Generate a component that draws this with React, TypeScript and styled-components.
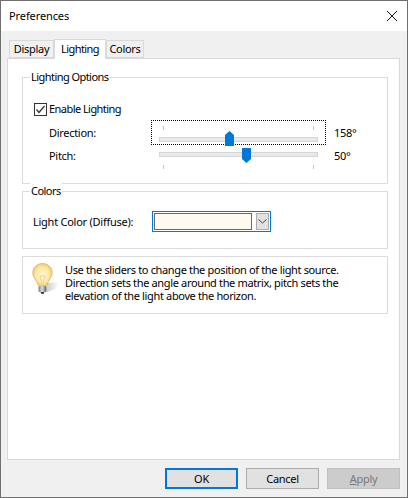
import { createGlobalStyle } from 'styled-components';
import styled from 'styled-components';

const GlobalStyle = createGlobalStyle`
  html, body {
    margin: 0;
    padding: 0;
    background: #f0f0f0;
  }
`;

const Dialog = styled.div`
  box-sizing: border-box;
  width: 408px;
  height: 498px;
  display: flex;
  flex-direction: column;
  background: #f0f0f0;
  border: 1px solid #707070;
  font-family: 'Noto Sans', sans-serif;
  font-size: 11px;
  letter-spacing: -0.3px;
  line-height: 16px;
  color: #000;
  overflow: hidden;
`;

const TitleBar = styled.div`
  height: 30px;
  flex: none;
  display: flex;
  align-items: center;
  justify-content: space-between;
  padding: 0 8px;
  background: #fff;
  font-size: 11px;
  letter-spacing: -0.1px;
`;

const CloseIcon = styled.svg`
  width: 10px;
  height: 10px;
  margin-right: 2px;
`;

const Body = styled.div`
  flex: 1;
  display: flex;
  flex-direction: column;
  padding: 7px 7px 8px 6px;
`;

const TabRow = styled.div`
  height: 20px;
  flex: none;
  display: flex;
  align-items: flex-end;
  padding-left: 2px;
  position: relative;
  z-index: 1;
`;

const Tab = styled.div<{ $active?: boolean; $width: number }>`
  box-sizing: border-box;
  width: ${(p) => p.$width}px;
  height: ${(p) => (p.$active ? 20 : 18)}px;
  margin-bottom: ${(p) => (p.$active ? -1 : 0)}px;
  display: flex;
  align-items: center;
  justify-content: center;
  background: ${(p) => (p.$active ? '#fff' : '#f0f0f0')};
  border: 1px solid #d9d9d9;
  border-bottom: ${(p) => (p.$active ? 'none' : '1px solid #d9d9d9')};
  padding-bottom: ${(p) => (p.$active ? 2 : 0)}px;
  letter-spacing: ${(p) => (p.$active ? -0.55 : -0.3)}px;
`;

const Panel = styled.div`
  box-sizing: border-box;
  height: 402px;
  display: flex;
  flex-direction: column;
  gap: 7px;
  padding: 18px 11px 0 14px;
  background: #fff;
  border: 1px solid #d9d9d9;
`;

const Group = styled.fieldset<{ $height: number }>`
  box-sizing: border-box;
  height: ${(p) => p.$height}px;
  margin: 0;
  padding: 0;
  border: 1px solid #dcdcdc;
  position: relative;
`;

const GroupTitle = styled.div`
  position: absolute;
  top: -9px;
  left: 7px;
  padding: 0 1px;
  background: #fff;
  letter-spacing: -0.55px;
`;

const LightingBody = styled.div`
  display: grid;
  grid-template-columns: 118px 173px auto;
  grid-template-rows: 24px 23px 24px;
  padding: 19px 0 0 11px;
  align-items: center;
`;

const CheckRow = styled.label`
  grid-column: 1 / span 3;
  display: flex;
  align-items: center;
  gap: 2px;
  letter-spacing: -0.55px;
`;

const CheckBox = styled.span`
  box-sizing: border-box;
  width: 13px;
  height: 13px;
  display: block;
  border: 1px solid #333;
  background: #fff;
`;

const CheckMark = styled.svg`
  display: block;
  width: 11px;
  height: 11px;
`;

const SliderLabel = styled.div`
  padding-left: 15px;
`;

const SliderBox = styled.div<{ $focused?: boolean }>`
  box-sizing: border-box;
  height: 23px;
  position: relative;
  outline: ${(p) => (p.$focused ? '1px dotted #000' : 'none')};
`;

const Track = styled.div<{ $top: number }>`
  box-sizing: border-box;
  position: absolute;
  left: 7px;
  width: 159px;
  top: ${(p) => p.$top}px;
  height: 5px;
  background: #e7eaea;
  border: 1px solid #d6d6d6;
`;

const Tick = styled.div<{ $left: number; $top: number }>`
  position: absolute;
  left: ${(p) => p.$left}px;
  top: ${(p) => p.$top}px;
  width: 1px;
  height: 4px;
  background: #c4c4c4;
`;

const Thumb = styled.svg<{ $left: number; $top: number }>`
  position: absolute;
  left: ${(p) => p.$left}px;
  top: ${(p) => p.$top}px;
  width: 9px;
  height: 15px;
`;

const Value = styled.div`
  padding-left: 9px;
`;

const ColorRow = styled.div`
  display: flex;
  align-items: center;
  padding: 19px 0 0 10px;
`;

const ColorLabel = styled.div`
  width: 119px;
  letter-spacing: -0.25px;
`;

const Combo = styled.div`
  box-sizing: border-box;
  width: 119px;
  height: 21px;
  display: flex;
  align-items: stretch;
  justify-content: space-between;
  padding: 1px;
  border: 1px solid #0078d7;
`;

const Swatch = styled.div`
  box-sizing: border-box;
  width: 98px;
  background: #fffaf0;
  border: 1px solid #696969;
`;

const ComboButton = styled.div`
  box-sizing: border-box;
  width: 13px;
  display: flex;
  align-items: center;
  justify-content: center;
  background: #e1e1e1;
  border: 1px solid #adadad;
`;

const InfoBox = styled.div`
  box-sizing: border-box;
  height: 58px;
  display: flex;
  gap: 6px;
  padding: 6px 0 0 9px;
  border: 1px solid #dcdcdc;
  line-height: 13px;
  letter-spacing: -0.35px;
`;

const Bulb = styled.svg`
  flex: none;
  width: 27px;
  height: 31px;
`;

const InfoText = styled.div`
  white-space: pre-line;
`;

const Footer = styled.div`
  display: flex;
  justify-content: flex-end;
  gap: 8px;
  padding-top: 8px;
`;

const Button = styled.div<{ $kind?: 'default' | 'disabled' }>`
  box-sizing: border-box;
  width: 73px;
  height: 21px;
  display: flex;
  align-items: center;
  justify-content: center;
  background: ${(p) => (p.$kind === 'disabled' ? '#cccccc' : '#e1e1e1')};
  color: ${(p) => (p.$kind === 'disabled' ? '#787878' : '#000')};
  border: ${(p) =>
    p.$kind === 'default'
      ? '2px solid #0078d7'
      : p.$kind === 'disabled'
        ? '1px solid #bfbfbf'
        : '1px solid #adadad'};
  u {
    text-underline-offset: 1px;
  }
`;

const ThumbShape = ({ left, top, down }: { left: number; top: number; down?: boolean }) => (
  <Thumb $left={left} $top={top} viewBox="0 0 9 15">
    <path d={down ? 'M0 0H9V11L4.5 15L0 11Z' : 'M4.5 0L9 4V15H0V4Z'} fill="#0078d7" />
  </Thumb>
);

const LightBulb = () => (
  <Bulb viewBox="0 0 27 31">
    <defs>
      <radialGradient id="glass" cx="0.5" cy="0.5" r="0.62">
        <stop offset="0" stopColor="#fff6d2" />
        <stop offset="0.55" stopColor="#fde9a6" />
        <stop offset="0.85" stopColor="#f2c867" />
        <stop offset="1" stopColor="#d9a63c" />
      </radialGradient>
      <linearGradient id="screw" x1="0" x2="1" y1="0" y2="0">
        <stop offset="0" stopColor="#7a7a7a" />
        <stop offset="0.45" stopColor="#e0e0e0" />
        <stop offset="1" stopColor="#5c5c5c" />
      </linearGradient>
      <linearGradient id="shade" x1="0" x2="1" y1="0" y2="0">
        <stop offset="0" stopColor="#d0d0d0" />
        <stop offset="1" stopColor="#ffffff" />
      </linearGradient>
    </defs>
    <path d="M15 20L27 19L24 26L15 29Z" fill="url(#shade)" />
    <path
      d="M10.500 0.500C5 0.500 0.800 4.500 0.800 9.800C0.800 14.500 4.500 16.500 6 22C6.500 23.500 14.500 23.500 15 22C16.500 16.500 20.200 14.500 20.200 9.800C20.200 4.500 16 0.500 10.500 0.500Z"
      fill="url(#glass)"
      stroke="#d8ab4a"
      strokeWidth="0.7"
    />
    <path d="M8 13L10 21M13 13L11 21M8 13L13 13" stroke="#d6c48f" strokeWidth="0.6" fill="none" />
    <rect x="6.500" y="23" width="8" height="6" rx="1" fill="url(#screw)" />
    <path d="M8.500 29H12.500L11.500 31H9.500Z" fill="#444" />
  </Bulb>
);

const App = () => {
  return (
    <>
      <GlobalStyle />
      <Dialog>
        <TitleBar>
          Preferences
          <CloseIcon viewBox="0 0 10 10">
            <path d="M0 0L10 10M10 0L0 10" stroke="#111" strokeWidth="1" fill="none" />
          </CloseIcon>
        </TitleBar>
        <Body>
          <TabRow>
            <Tab $width={45}>Display</Tab>
            <Tab $width={52} $active>Lighting</Tab>
            <Tab $width={38}>Colors</Tab>
          </TabRow>
          <Panel>
            <Group $height={107}>
              <GroupTitle>Lighting Options</GroupTitle>
              <LightingBody>
                <CheckRow>
                  <CheckBox>
                    <CheckMark viewBox="0 0 11 11">
                      <path d="M1.500 5.500L4 8.500L9.500 2" stroke="#333" strokeWidth="1.300" fill="none" />
                    </CheckMark>
                  </CheckBox>
                  Enable Lighting
                </CheckRow>
                <SliderLabel>Direction:</SliderLabel>
                <SliderBox $focused>
                  <Tick $left={11} $top={5} />
                  <Tick $left={161} $top={5} />
                  <Track $top={16} />
                  <ThumbShape left={73} top={10} />
                </SliderBox>
                <Value>158°</Value>
                <SliderLabel>Pitch:</SliderLabel>
                <SliderBox>
                  <Track $top={7} />
                  <ThumbShape left={90} top={3} down />
                  <Tick $left={11} $top={20} />
                  <Tick $left={161} $top={20} />
                </SliderBox>
                <Value>50°</Value>
              </LightingBody>
            </Group>
            <Group $height={58}>
              <GroupTitle>Colors</GroupTitle>
              <ColorRow>
                <ColorLabel>Light Color (Diffuse):</ColorLabel>
                <Combo>
                  <Swatch />
                  <ComboButton>
                    <svg width="9" height="5" viewBox="0 0 9 5">
                      <path d="M0.500 0.500L4.500 4L8.500 0.500" stroke="#444" fill="none" />
                    </svg>
                  </ComboButton>
                </Combo>
              </ColorRow>
            </Group>
            <InfoBox>
              <LightBulb />
              <InfoText>
                {'Use the sliders to change the position of the light source.\nDirection sets the angle around the matrix, pitch sets the\nelevation of the light above the horizon.'}
              </InfoText>
            </InfoBox>
          </Panel>
          <Footer>
            <Button $kind="default">OK</Button>
            <Button>Cancel</Button>
            <Button $kind="disabled"><span><u>A</u>pply</span></Button>
          </Footer>
        </Body>
      </Dialog>
    </>
  );
};

export default App;
